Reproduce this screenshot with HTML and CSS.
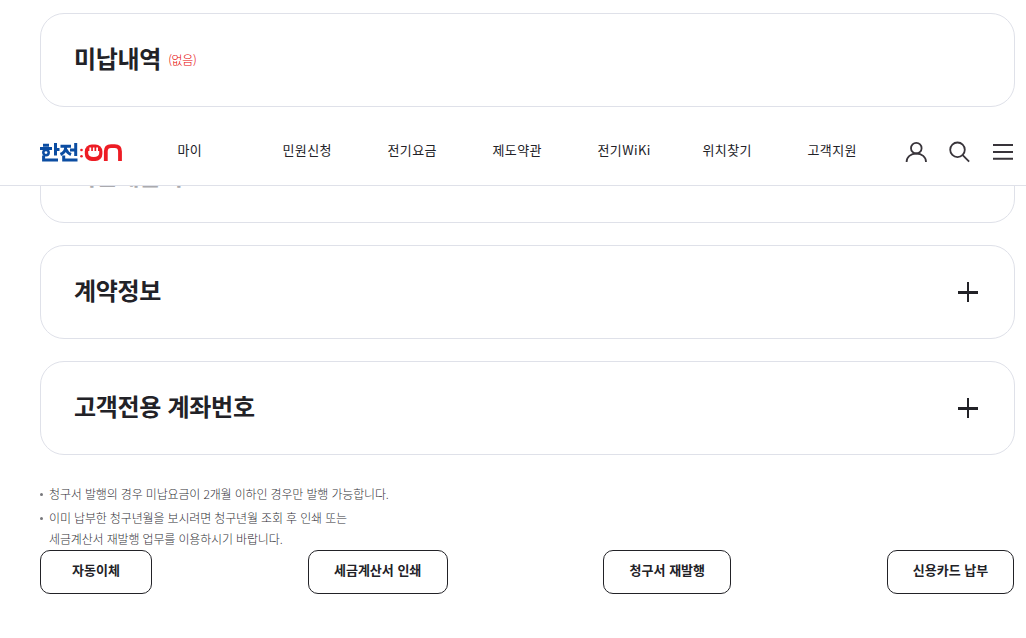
FILE: index.html
```
<!DOCTYPE html>
<html lang="ko">
<head>
    <meta charset="UTF-8">
    <meta name="viewport" content="width=device-width, initial-scale=1.0">
    <title>한전:ON</title>
    <link rel="stylesheet" href="styles.css">
</head>
<body>
    <header class="header">
        <a href="#" class="logo" aria-label="한전ON">
            <svg width="84" height="20" viewBox="0 0 84 20" fill="none">
                <!-- 한전 -->
                <g stroke="#0b4da2" stroke-width="3">
                    <path d="M3 2.2H9M0 5.4H12M15.5 0V12.5M15.5 6.5H19.5M3.6 12.5V17H18"/>
                    <circle cx="6" cy="9.6" r="2.7" stroke-width="2.5"/>
                    <path d="M20.5 3.2H31M25.8 3.5C25.8 7.5 24 10 20.5 11.5M26 6.5C27 9 28.5 10.5 31 11.5M30 7H35M35.7 0V13M23.7 12.5V17H37.5"/>
                </g>
                <!-- 콜론 -->
                <g fill="#ed1c24">
                    <circle cx="41.5" cy="7" r="1.3"/>
                    <circle cx="41.5" cy="13.2" r="1.3"/>
                </g>
                <!-- ON -->
                <rect x="44.8" y="1.4" width="17.6" height="16.6" rx="7" fill="#ed1c24"/>
                <g fill="#fff">
                    <path d="M48.2 8H59.2V10C59.2 12.8 57.2 14 53.7 14S48.2 12.8 48.2 10Z"/>
                    <path d="M49.4 4.4H51.2V9H49.4ZM52.9 4.4H54.5V9H52.9ZM56.2 4.4H58V9H56.2Z"/>
                </g>
                <path d="M65.8 18V8.5C65.8 5 67.6 3.2 71 3.2H74.8C78.2 3.2 80 5 80 8.5V18" stroke="#ed1c24" stroke-width="3.8"/>
            </svg>
        </a>
        <nav class="gnb">
            <a href="#">마이</a>
            <a href="#">민원신청</a>
            <a href="#">전기요금</a>
            <a href="#">제도약관</a>
            <a href="#">전기WiKi</a>
            <a href="#">위치찾기</a>
            <a href="#">고객지원</a>
        </nav>
        <div class="utils">
            <button type="button" class="util-btn" aria-label="로그인">
                <svg width="22" height="22" viewBox="0 0 22 22" fill="none" stroke="#38343a" stroke-width="1.8">
                    <circle cx="11.3" cy="7.2" r="5.3"/>
                    <path d="M1.6 20.9C1.6 15.9 5.8 12.5 11.3 12.5S21 15.9 21 20.9"/>
                </svg>
            </button>
            <button type="button" class="util-btn" aria-label="검색">
                <svg width="22" height="22" viewBox="0 0 22 22" fill="none" stroke="#38343a" stroke-width="1.8">
                    <circle cx="9.5" cy="8.8" r="7.3"/>
                    <path d="M14.7 14.2L21.1 20.6"/>
                </svg>
            </button>
            <button type="button" class="util-btn" aria-label="전체메뉴">
                <svg width="22" height="22" viewBox="0 0 22 22" fill="none" stroke="#38343a" stroke-width="2">
                    <path d="M1 4H21M1 11H21M1 17.7H21"/>
                </svg>
            </button>
        </div>
    </header>

    <main class="content">
        <section class="card">
            <h2 class="card-title">미납내역</h2>
            <span class="card-state">(없음)</span>
        </section>
        <section class="card">
            <h2 class="card-title card-title-off">지난세금비</h2>
        </section>
        <section class="card">
            <h2 class="card-title">계약정보</h2>
            <button type="button" class="btn-open" aria-label="열기"></button>
        </section>
        <section class="card">
            <h2 class="card-title">고객전용 계좌번호</h2>
            <button type="button" class="btn-open" aria-label="열기"></button>
        </section>

        <ul class="notice">
            <li>청구서 발행의 경우 미납요금이 2개월 이하인 경우만 발행 가능합니다.</li>
            <li>이미 납부한 청구년월을 보시려면 청구년월 조회 후 인쇄 또는<br>세금계산서 재발행 업무를 이용하시기 바랍니다.</li>
        </ul>

        <div class="btn-area">
            <button type="button" class="btn btn-auto">자동이체</button>
            <button type="button" class="btn btn-tax">세금계산서 인쇄</button>
            <button type="button" class="btn btn-bill">청구서 재발행</button>
            <button type="button" class="btn btn-card">신용카드 납부</button>
        </div>
    </main>
</body>
</html>
```

FILE: styles.css
```
* {
    box-sizing: border-box;
}
body {
    margin: 0;
    padding: 0;
    font-family: "Noto Sans CJK KR", "Noto Sans", sans-serif;
    color: #222227;
    background: #fff;
    overflow: hidden;
}
a {
    color: inherit;
    text-decoration: none;
}
button {
    padding: 0;
    border: none;
    background: none;
    font-family: inherit;
    color: inherit;
    cursor: pointer;
}
.header {
    position: absolute;
    top: 118px;
    left: 0;
    z-index: 10;
    display: flex;
    align-items: center;
    width: 100%;
    height: 68px;
    padding: 0 12px 0 40px;
    background: #fff;
    border-bottom: 1px solid #dfe1e9;
}
.logo {
    flex: none;
    width: 137.5px;
    height: 20px;
    padding-top: 1px;
}
.logo svg {
    display: block;
}
.gnb {
    display: flex;
    padding-bottom: 4px;
}
.gnb a {
    flex: none;
    width: 105px;
    font-size: 13px;
    line-height: 20px;
    letter-spacing: 0.4px;
}
.gnb a:last-child {
    width: auto;
}
.utils {
    display: flex;
    gap: 22px;
    margin-left: auto;
}
.util-btn {
    width: 22px;
    height: 22px;
}
.util-btn:first-child {
    margin-right: -1px;
}
.util-btn svg {
    display: block;
}
.content {
    padding: 13px 11px 0 40px;
}
.card {
    display: flex;
    align-items: center;
    height: 94px;
    margin-bottom: 22px;
    padding: 0 36px 0 33px;
    border: 1px solid #dfe1e9;
    border-radius: 24px;
}
.card-title {
    margin: 0;
    padding-bottom: 4px;
    font-size: 24px;
    font-weight: 700;
    line-height: 36px;
    letter-spacing: -0.3px;
}
.card-title-off {
    padding-bottom: 3px;
    color: #aaaaae;
}
.card-state {
    margin-left: 7px;
    padding-bottom: 1px;
    font-size: 12px;
    font-weight: 300;
    letter-spacing: -0.3px;
    color: #e60000;
}
.btn-open {
    width: 20px;
    height: 20px;
    margin-left: auto;
    background:
        linear-gradient(#222227, #222227) center / 100% 3px no-repeat,
        linear-gradient(#222227, #222227) center / 2px 100% no-repeat;
}
.notice {
    margin: 28px 0 0;
    padding: 0;
    list-style: none;
    font-size: 12px;
    font-weight: 300;
    line-height: 21px;
    letter-spacing: -0.15px;
    color: #333338;
}
.notice li {
    position: relative;
    margin-bottom: 3px;
    padding-left: 9px;
}
.notice li:last-child {
    margin-bottom: 0;
}
.notice li::before {
    content: "";
    position: absolute;
    top: 10px;
    left: 0;
    width: 3px;
    height: 3px;
    border-radius: 50%;
    background: #77777b;
}
.btn-area {
    display: flex;
    justify-content: space-between;
    margin-top: 1px;
    padding-right: 1px;
}
.btn {
    height: 44px;
    padding-bottom: 6px;
    border: 1px solid #222227;
    border-radius: 10px;
    font-size: 13px;
    font-weight: 700;
}
.btn-auto {
    width: 112px;
}
.btn-tax {
    width: 140px;
}
.btn-bill {
    width: 128px;
}
.btn-card {
    width: 127px;
}
```
